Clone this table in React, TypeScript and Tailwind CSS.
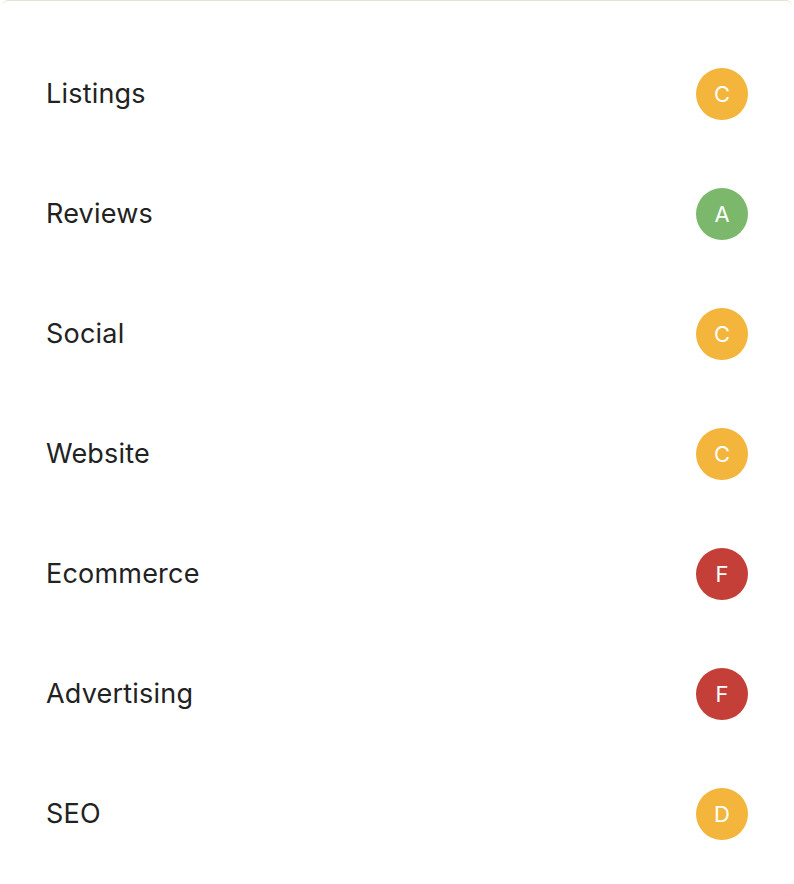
import React from "react";

const rows: { label: string; grade: string; color: string }[] = [
  { label: "Listings", grade: "C", color: "bg-[#f3b53b]" },
  { label: "Reviews", grade: "A", color: "bg-[#7cb86b]" },
  { label: "Social", grade: "C", color: "bg-[#f3b53b]" },
  { label: "Website", grade: "C", color: "bg-[#f3b53b]" },
  { label: "Ecommerce", grade: "F", color: "bg-[#c33f37]" },
  { label: "Advertising", grade: "F", color: "bg-[#c33f37]" },
  { label: "SEO", grade: "D", color: "bg-[#f3b53b]" },
];

export default function App() {
  return (
    <div className="w-[794px] h-[884px] bg-white" style={{ fontFamily: "Inter, 'Noto Sans', sans-serif" }}>
      <div className="mx-[2px] rounded-t-[6px] border-t border-[#e9e1d1] pl-[44px] pr-[44px] pt-[33px]">
        {rows.map((r) => (
          <div key={r.label} className="flex h-[120px] items-center justify-between">
            <span className="text-[27px] tracking-[0.2px] text-[#222222]">{r.label}</span>
            <div className={`flex h-[52px] w-[52px] items-center justify-center rounded-full ${r.color} text-[22px] text-white`}>
              {r.grade}
            </div>
          </div>
        ))}
      </div>
    </div>
  );
}
